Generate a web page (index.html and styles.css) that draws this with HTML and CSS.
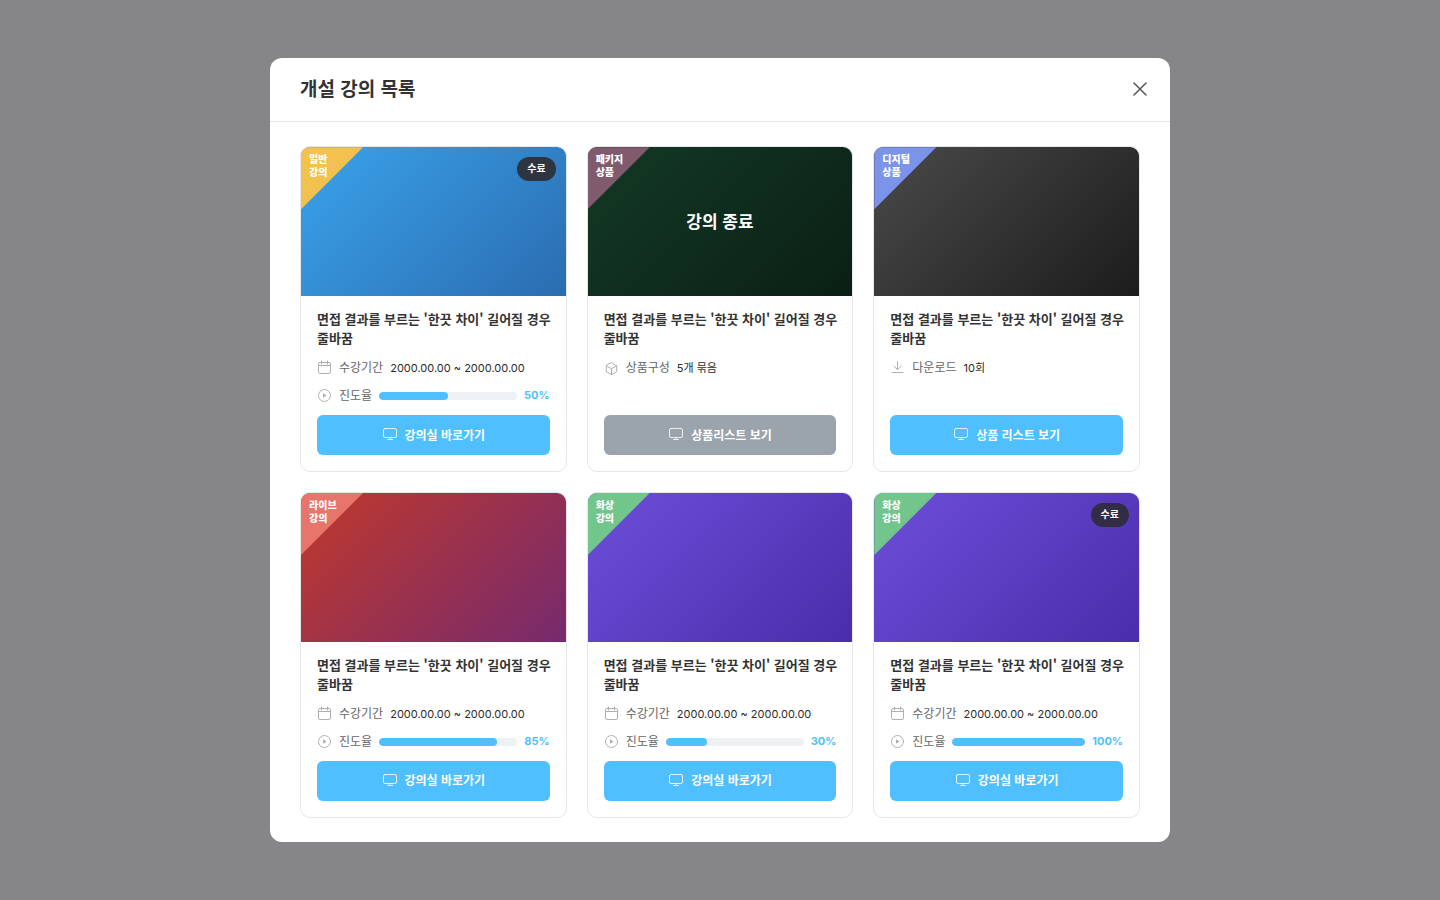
FILE: index.html
```
<!DOCTYPE html>
<html lang="ko">
<head>
<meta charset="utf-8">
<meta name="viewport" content="width=device-width, initial-scale=1">
<title>개설 강의 목록</title>
<link rel="stylesheet" href="styles.css">
</head>
<body>
<svg class="sprite" aria-hidden="true">
  <symbol id="calendar" viewBox="0 0 15 15"><rect x="1.5" y="2.5" width="12" height="11" rx="1.5"/><path d="M1.5 5.5h12M4.5 1v3M10.5 1v3"/></symbol>
  <symbol id="play" viewBox="0 0 15 15"><circle cx="7.5" cy="7.5" r="6"/><path class="solid" d="M6 5.2v4.6l3.6-2.3z"/></symbol>
  <symbol id="box" viewBox="0 0 15 15"><path d="M7.5 1.8l5.2 2.9v6L7.5 13.6l-5.2-2.9v-6zM2.5 4.9l5 2.8 5-2.8M7.5 7.7v5.8"/></symbol>
  <symbol id="download" viewBox="0 0 15 15"><path d="M7.5 1.5v8M4 6.3l3.5 3.3L11 6.3M2 12.5h11"/></symbol>
  <symbol id="monitor" viewBox="0 0 16 16"><rect x="1.5" y="2.5" width="13" height="9" rx="1.5"/><path d="M8 11.5v2M5.5 13.5h5"/></symbol>
</svg>
<div class="overlay">
<section class="modal" role="dialog" aria-modal="true" aria-labelledby="modal-title">
  <header class="modal-header">
    <h1 id="modal-title">개설 강의 목록</h1>
    <button class="close" type="button" aria-label="닫기"><svg viewBox="0 0 16 16"><path d="M2 2l12 12M14 2l-12 12"/></svg></button>
  </header>
  <div class="grid">
    <article class="card">
      <div class="thumb blue"><span class="ribbon general">일반<br>강의</span><span class="badge">수료</span></div>
      <div class="body">
        <h2>면접 결과를 부르는 '한끗 차이' 길어질 경우<br>줄바꿈</h2>
        <div class="meta">
          <div class="row"><svg class="icon"><use href="#calendar"/></svg><span>수강기간</span><b>2000.00.00 ~ 2000.00.00</b></div>
          <div class="row"><svg class="icon"><use href="#play"/></svg><span>진도율</span><div class="track"><div class="fill" style="width:50%"></div></div><strong>50%</strong></div>
        </div>
        <button class="action" type="button"><svg><use href="#monitor"/></svg>강의실 바로가기</button>
      </div>
    </article>
    <article class="card">
      <div class="thumb green"><span class="ribbon package">패키지<br>상품</span><span class="ended">강의 종료</span></div>
      <div class="body">
        <h2>면접 결과를 부르는 '한끗 차이' 길어질 경우<br>줄바꿈</h2>
        <div class="meta">
          <div class="row"><svg class="icon"><use href="#box"/></svg><span>상품구성</span><b>5개 묶음</b></div>
        </div>
        <button class="action muted" type="button"><svg><use href="#monitor"/></svg>상품리스트 보기</button>
      </div>
    </article>
    <article class="card">
      <div class="thumb dark"><span class="ribbon digital">디지털<br>상품</span></div>
      <div class="body">
        <h2>면접 결과를 부르는 '한끗 차이' 길어질 경우<br>줄바꿈</h2>
        <div class="meta">
          <div class="row"><svg class="icon"><use href="#download"/></svg><span>다운로드</span><b>10회</b></div>
        </div>
        <button class="action" type="button"><svg><use href="#monitor"/></svg>상품 리스트 보기</button>
      </div>
    </article>
    <article class="card">
      <div class="thumb red"><span class="ribbon live">라이브<br>강의</span></div>
      <div class="body">
        <h2>면접 결과를 부르는 '한끗 차이' 길어질 경우<br>줄바꿈</h2>
        <div class="meta">
          <div class="row"><svg class="icon"><use href="#calendar"/></svg><span>수강기간</span><b>2000.00.00 ~ 2000.00.00</b></div>
          <div class="row"><svg class="icon"><use href="#play"/></svg><span>진도율</span><div class="track"><div class="fill" style="width:85%"></div></div><strong>85%</strong></div>
        </div>
        <button class="action" type="button"><svg><use href="#monitor"/></svg>강의실 바로가기</button>
      </div>
    </article>
    <article class="card">
      <div class="thumb purple"><span class="ribbon video">화상<br>강의</span></div>
      <div class="body">
        <h2>면접 결과를 부르는 '한끗 차이' 길어질 경우<br>줄바꿈</h2>
        <div class="meta">
          <div class="row"><svg class="icon"><use href="#calendar"/></svg><span>수강기간</span><b>2000.00.00 ~ 2000.00.00</b></div>
          <div class="row"><svg class="icon"><use href="#play"/></svg><span>진도율</span><div class="track"><div class="fill" style="width:30%"></div></div><strong>30%</strong></div>
        </div>
        <button class="action" type="button"><svg><use href="#monitor"/></svg>강의실 바로가기</button>
      </div>
    </article>
    <article class="card">
      <div class="thumb purple"><span class="ribbon video">화상<br>강의</span><span class="badge">수료</span></div>
      <div class="body">
        <h2>면접 결과를 부르는 '한끗 차이' 길어질 경우<br>줄바꿈</h2>
        <div class="meta">
          <div class="row"><svg class="icon"><use href="#calendar"/></svg><span>수강기간</span><b>2000.00.00 ~ 2000.00.00</b></div>
          <div class="row"><svg class="icon"><use href="#play"/></svg><span>진도율</span><div class="track"><div class="fill" style="width:100%"></div></div><strong>100%</strong></div>
        </div>
        <button class="action" type="button"><svg><use href="#monitor"/></svg>강의실 바로가기</button>
      </div>
    </article>
  </div>
</section>
</div>
</body>
</html>
```
FILE: styles.css
```
* { box-sizing: border-box; }
body { margin: 0; font-family: "Noto Sans CJK KR", sans-serif; color: #333; }
.sprite { position: absolute; width: 0; height: 0; }
svg, symbol { fill: none; stroke: currentColor; stroke-linecap: round; stroke-linejoin: round; }
.solid { fill: currentColor; stroke: none; }
.overlay { min-height: 100vh; padding: 24px; display: flex; align-items: center; justify-content: center; background: #868688; }
.modal { width: 100%; max-width: 900px; background: #fff; border-radius: 12px; }
.modal-header { display: flex; align-items: center; justify-content: space-between; padding: 15px 22px 16px 30px; border-bottom: 1px solid #e6e6e6; }
h1 { margin: 0; padding-bottom: 2px; font-size: 19px; line-height: 30px; font-weight: 700; }
.close { width: 16px; height: 16px; padding: 0; border: 0; background: none; color: #555; cursor: pointer; }
.close svg { display: block; width: 16px; height: 16px; stroke-width: 1.5; }
.grid { display: grid; grid-template-columns: repeat(3, minmax(0, 1fr)); gap: 20px; padding: 24px 30px; }
.card { display: flex; flex-direction: column; border: 1px solid #e5e7eb; border-radius: 10px; overflow: hidden; }
.thumb { position: relative; display: flex; align-items: center; justify-content: center; aspect-ratio: 16 / 9; }
.blue { background: linear-gradient(135deg, #3aa3eb, #2b6cb0); }
.green { background: linear-gradient(135deg, #143a26, #0a1f14); }
.dark { background: linear-gradient(135deg, #4a4a4a, #1c1c1c); }
.red { background: linear-gradient(135deg, #c0392b, #762a6e); }
.purple { background: linear-gradient(135deg, #6c4fd8, #4a2dab); }
.ribbon { position: absolute; top: 0; left: 0; width: 62px; height: 62px; padding: 5px 8px; color: #fff; font-size: 10px; line-height: 13px; font-weight: 900; white-space: nowrap; clip-path: polygon(0 0, 100% 0, 0 100%); }
.general { background: #f2c14e; }
.package { background: #805b6e; }
.digital { background: #7b93e8; }
.live { background: #e8756b; }
.video { background: #72c68c; }
.badge { position: absolute; top: 10px; right: 10px; padding: 0 10px 2px; border-radius: 12px; background: #2d3640; color: #fff; font-size: 10px; line-height: 22px; font-weight: 700; }
.purple .badge { background: #322c45; }
.ended { padding-bottom: 2px; color: #fff; font-size: 17px; line-height: 24px; font-weight: 700; }
.body { flex: 1; display: flex; flex-direction: column; padding: 13px 16px 16px; }
h2 { margin: 0 0 11px; font-size: 13px; line-height: 19px; font-weight: 700; white-space: nowrap; }
.meta { min-height: 48px; margin-bottom: 9px; display: flex; flex-direction: column; gap: 8px; }
.row { display: flex; align-items: center; gap: 7px; height: 20px; color: #666; font-size: 12px; line-height: 18px; }
.row span { padding-bottom: 2px; }
.row b { color: #2b2b2b; font-family: Inter, "Noto Sans CJK KR", sans-serif; font-size: 11px; font-weight: 400; }
.row strong { padding-bottom: 2px; color: #4fbfff; font-family: Inter, sans-serif; font-size: 11px; font-weight: 700; }
.icon { width: 15px; height: 15px; flex: none; color: #b0b0b0; }
.track { flex: 1; height: 8px; border-radius: 4px; background: #edf1f4; overflow: hidden; }
.fill { height: 100%; border-radius: 4px; background: #4fbfff; }
.action { display: flex; align-items: center; justify-content: center; gap: 7px; width: 100%; height: 40px; margin-top: auto; padding: 0 0 2px; border: 0; border-radius: 6px; background: #4fbfff; color: #fff; font-family: inherit; font-size: 12px; font-weight: 700; cursor: pointer; }
.action svg { width: 16px; height: 16px; stroke-opacity: 0.8; }
.muted { background: #9ba3ad; }
```
